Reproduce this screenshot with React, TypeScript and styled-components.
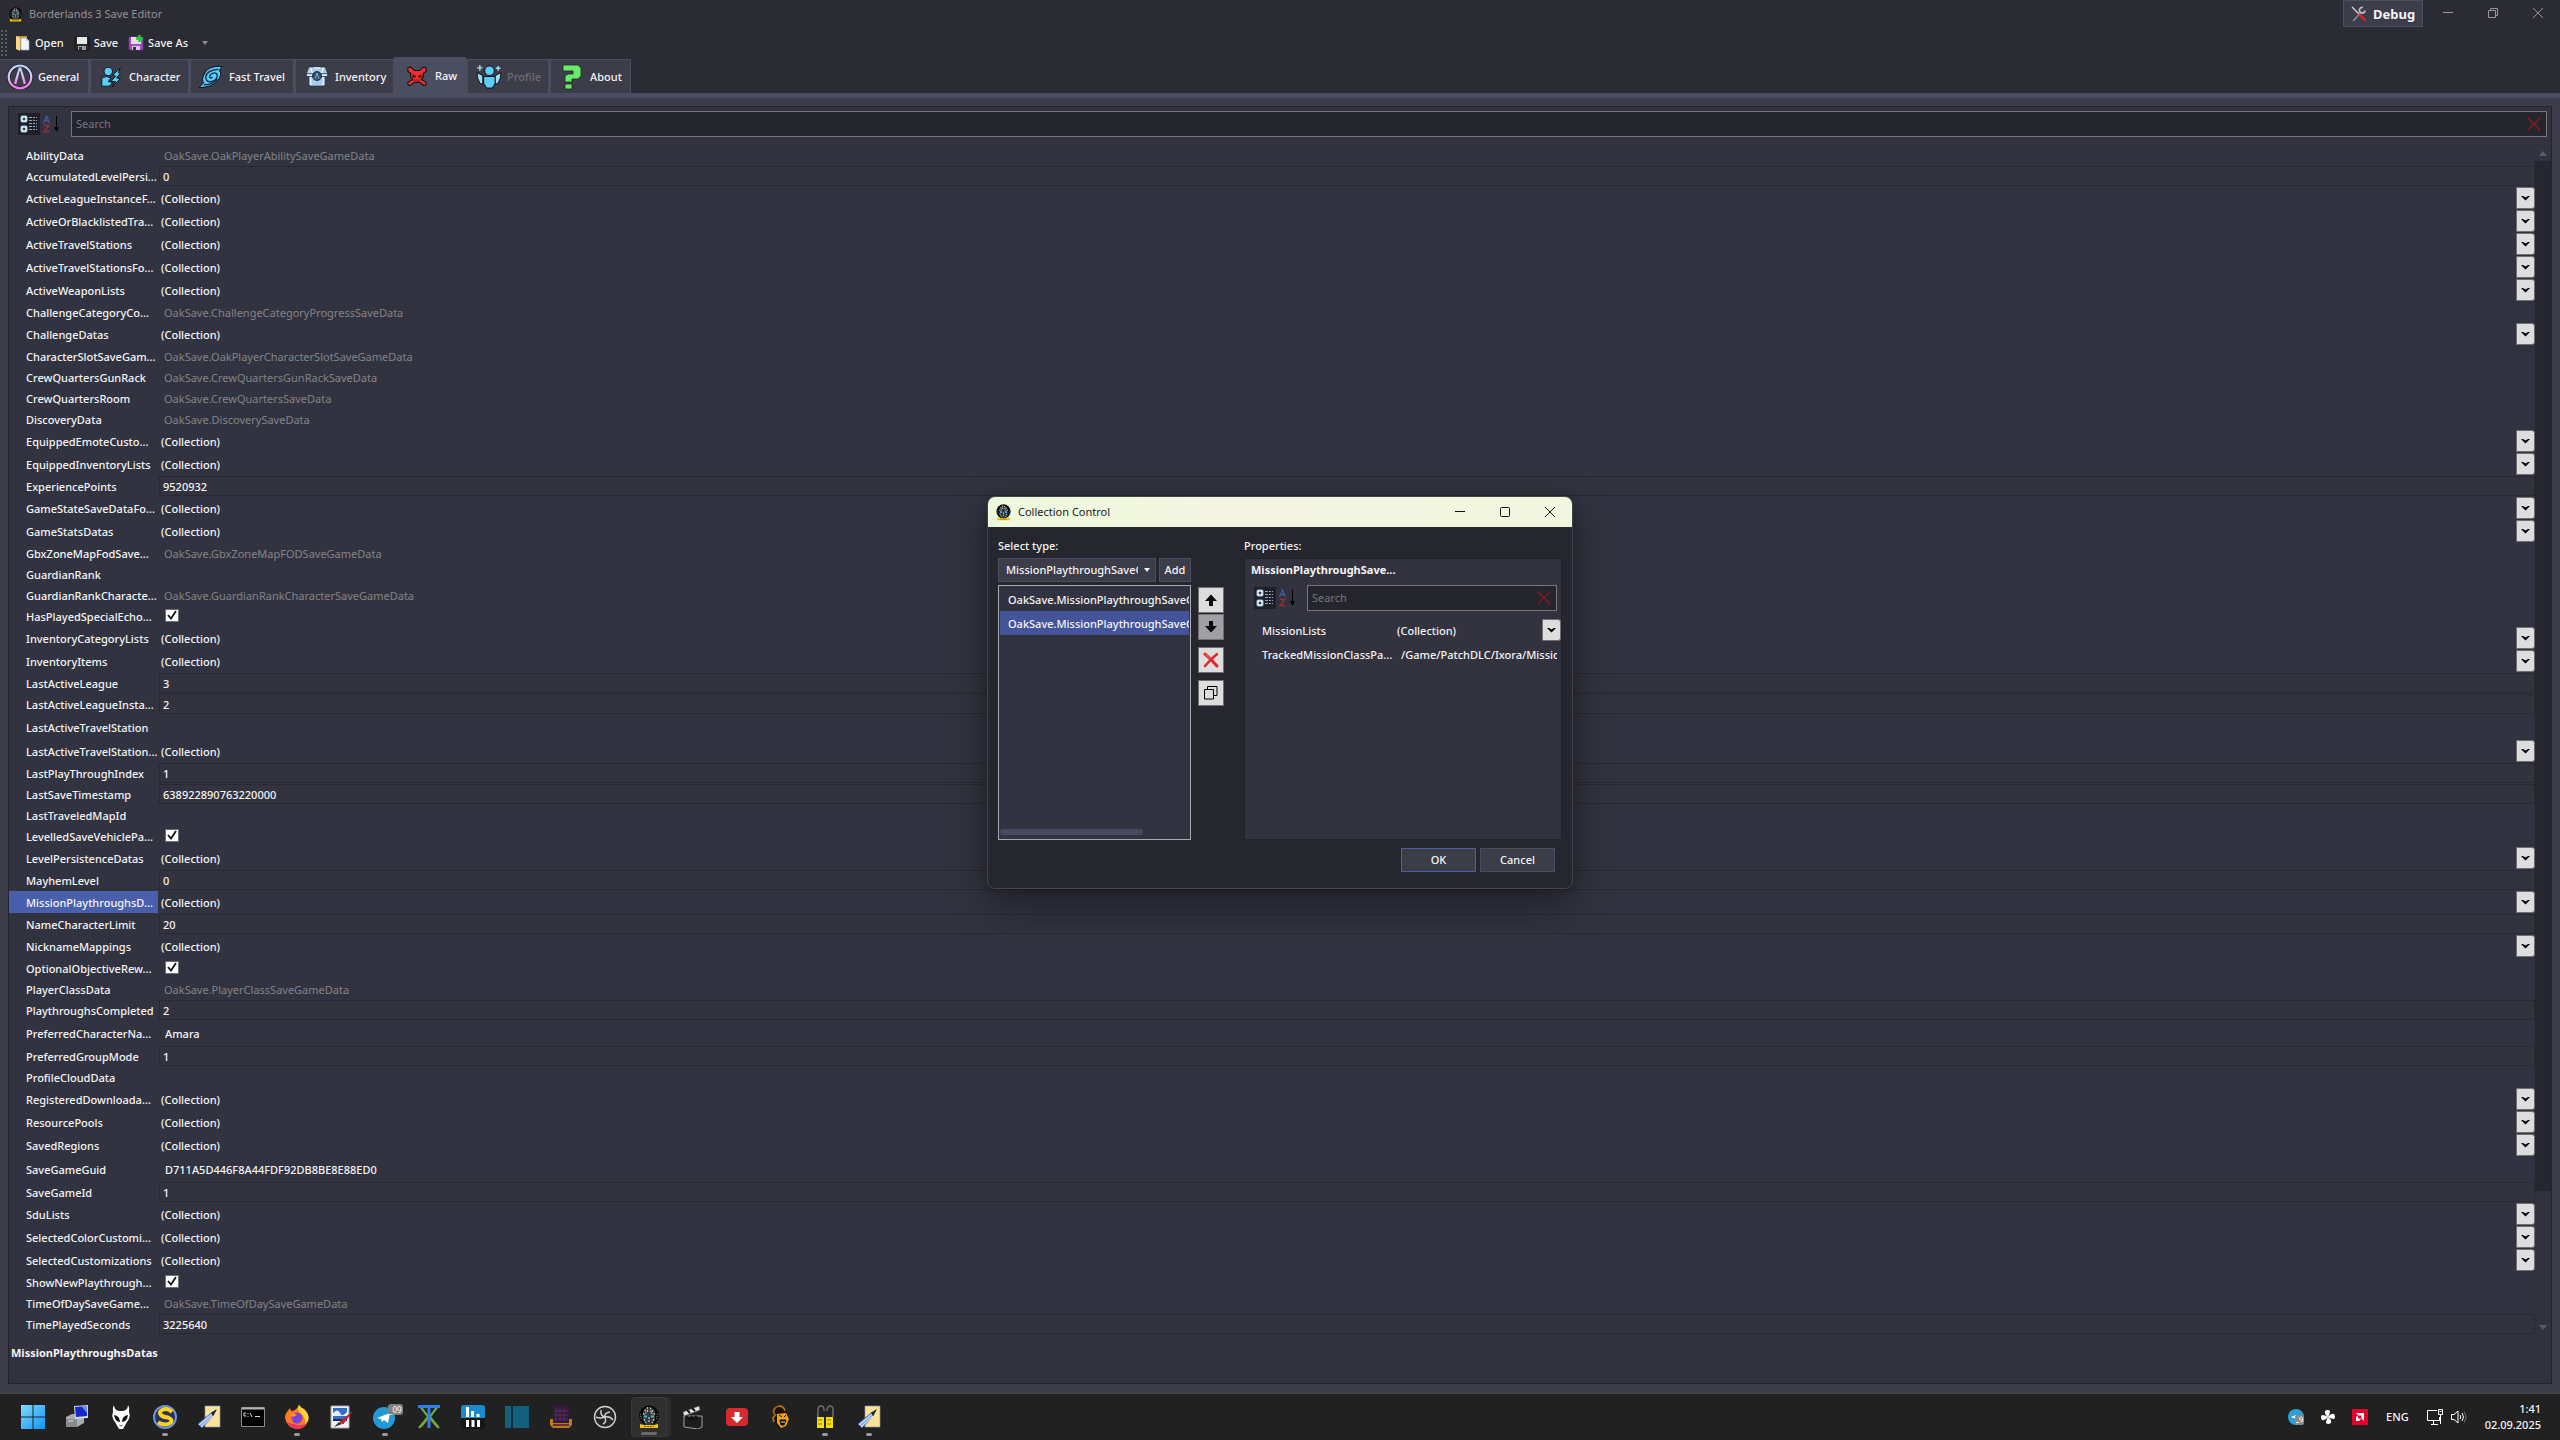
import React, { useId } from "react";
import styled, { createGlobalStyle, css } from "styled-components";

const c = {
  shell: "#2b2b33",
  tab: "#3d3c49",
  line: "#4b4e61",
  panel: "#33333f",
  list: "#323340",
  deep: "#25252d",
  edge: "#23232c",
  box: "#292932",
  accent: "#4a5fab",
  text: "#f4f4f4",
  muted: "#838386",
};

const Global = createGlobalStyle`
  * { box-sizing: border-box; }
  body { margin: 0; background: ${c.shell}; }
  body, button, input, select {
    font-family: "Noto Sans", "Open Sans", sans-serif;
    font-size: 11px;
    font-weight: 500;
    line-height: 16px;
    color: ${c.text};
  }
  button { margin: 0; padding: 0; border: 0; background: none; }
  svg { display: block; flex: none; }
`;

/* ---------- window shell ---------- */

const Desktop = styled.div`
  position: relative;
  min-height: 100vh;
  display: flex;
  flex-direction: column;
`;

const TitleBar = styled.header`
  display: flex;
  align-items: flex-start;
  height: 28px;
`;

const AppTitle = styled.h1`
  display: flex;
  align-items: center;
  gap: 6px;
  flex: 1;
  height: 28px;
  margin: 0;
  padding-left: 8px;
  font-size: 11px;
  font-weight: 400;
  color: #929295;
`;

const DebugButton = styled.button`
  display: flex;
  align-items: center;
  gap: 6px;
  width: 80px;
  height: 27px;
  margin-right: 2px;
  padding-left: 7px;
  border: 1px solid ${c.line};
  background: ${c.tab};
  font-size: 13px;
  font-weight: 700;
`;

const CaptionButton = styled.button`
  display: flex;
  align-items: center;
  justify-content: center;
  width: 45px;
  height: 26px;
  color: #98989b;
`;

const Toolbar = styled.div`
  display: flex;
  align-items: center;
  height: 29px;
  gap: 4px;
`;

const Grip = styled.div`
  width: 7px;
  height: 28px;
  margin-right: 1px;
  background-image: radial-gradient(#5b5b66 1px, transparent 1px);
  background-size: 4px 4px;
`;

const ToolButton = styled.button`
  display: flex;
  align-items: center;
  gap: 4px;
  padding: 2px 3px;
`;

const OverflowButton = styled.button`
  display: flex;
  width: 20px;
  justify-content: center;
  color: #8d8d90;
`;

const Tabs = styled.nav`
  display: flex;
  align-items: flex-end;
  height: 36px;
`;

const Tab = styled.button<{ $width: number; $active?: boolean }>`
  display: flex;
  align-items: center;
  gap: 4px;
  width: ${(p) => p.$width}px;
  height: 34px;
  padding-left: 6px;
  border: 1px solid ${c.line};
  border-left-width: 2px;
  border-bottom: 0;
  background: ${c.tab};
  &:first-child { border-left-width: 0; }
  &:disabled { color: #6c6c72; }
  ${(p) => p.$active && css`
    height: 36px;
    background: ${c.line};
  `}
`;

const TabIcon = styled.span<{ $wide?: boolean }>`
  display: flex;
  justify-content: center;
  width: ${(p) => (p.$wide ? 29 : 28)}px;
`;

const Content = styled.main`
  flex: 1;
  display: flex;
  flex-direction: column;
  padding: 8px;
  padding-bottom: 9px;
  border-top: 5px solid ${c.line};
  background: ${c.tab};
`;

/* ---------- property grid ---------- */

const GridPanel = styled.section`
  flex: 1;
  display: flex;
  flex-direction: column;
  min-height: 0;
  border: 1px solid ${c.edge};
  background: ${c.panel};
`;

const GridTools = styled.div`
  display: flex;
  align-items: center;
  height: 38px;
  padding: 4px 4px 8px 9px;
`;

const SortButton = styled.button<{ $on?: boolean }>`
  display: flex;
  align-items: center;
  justify-content: center;
  width: 22px;
  height: 22px;
  background: ${(p) => (p.$on ? "#1f1f27" : "transparent")};
`;

const SearchBox = styled.div`
  flex: 1;
  display: flex;
  align-items: center;
  height: 26px;
  min-width: 0;
  margin-left: 9px;
  padding: 0 4px;
  border: 1px solid #77777a;
  background: ${c.deep};
`;

const SearchInput = styled.input`
  flex: 1;
  min-width: 0;
  padding: 0;
  border: 0;
  outline: 0;
  background: none;
  font-weight: 400;
  &::placeholder { color: #77777a; opacity: 1; }
`;

const GridBody = styled.div`
  display: flex;
  background: ${c.list};
`;

const Rows = styled.div`
  flex: 1;
  min-width: 0;
`;

const Row = styled.div<{ $h: number }>`
  display: flex;
  height: ${(p) => p.$h}px;
  padding-bottom: 1px;
`;

const Name = styled.label<{ $on?: boolean }>`
  width: 149px;
  margin-right: 1px;
  padding-top: 2px;
  padding-left: 17px;
  display: flex;
  align-items: center;
  white-space: nowrap;
  background: ${(p) => (p.$on ? c.accent : "transparent")};
`;

const Value = styled.div`
  flex: 1;
  display: flex;
  align-items: center;
  min-width: 0;
`;

const NumberInput = styled.input`
  width: 100%;
  height: 20px;
  padding: 0 3px;
  border: 1px solid ${c.box};
  outline: 0;
  background: ${c.panel};
`;

const StringInput = styled.input`
  width: 100%;
  height: 22px;
  margin-right: 4px;
  padding: 0 0 0 6px;
  border: 0;
  outline: 0;
  background: none;
`;

const CollectionText = styled.span`
  flex: 1;
  padding-top: 2px;
  padding-left: 2px;
`;

const ObjectText = styled.span`
  padding-top: 2px;
  padding-left: 5px;
  font-weight: 400;
  color: ${c.muted};
`;

const DropButton = styled.button`
  display: flex;
  align-items: center;
  justify-content: center;
  width: 19px;
  height: 22px;
  border: 1px solid #707070;
  border-radius: 0 3px 3px 0;
  background: #dddddd;
  color: #000;
`;

const Check = styled.input`
  appearance: none;
  width: 14px;
  height: 13px;
  margin: 0 0 2px 6px;
  border: 1px solid #707070;
  background: #fff;
`;

const CheckSlot = styled.span`
  display: grid;
  align-items: center;
  & > * { grid-area: 1 / 1; }
  & > svg { margin: 0 0 2px 8px; pointer-events: none; }
`;

const ScrollTrack = styled.div`
  display: flex;
  flex-direction: column;
  width: 16px;
  background: ${c.panel};
`;

const ScrollArrow = styled.button`
  display: flex;
  align-items: center;
  justify-content: center;
  height: 16px;
  color: #5a5a72;
`;

const ScrollThumb = styled.div`
  flex: 1030;
  background: #26262e;
`;

const ScrollRest = styled.div`
  flex: 128;
`;

const Description = styled.footer`
  flex: 1;
  min-height: 48px;
  padding: 10px 2px;
  font-weight: 700;
`;

/* ---------- dialog ---------- */

const Dialog = styled.section`
  position: absolute;
  top: 496px;
  left: calc(50% - 293px);
  width: 586px;
  border: 1px solid #45454d;
  border-radius: 8px;
  overflow: hidden;
  background: #26262e;
  box-shadow: 0 16px 40px rgba(0, 0, 0, 0.4), 0 0 10px rgba(0, 0, 0, 0.2);
`;

const DialogBar = styled.header`
  display: flex;
  align-items: center;
  height: 30px;
  padding-left: 7px;
  background: linear-gradient(90deg, #edf9dc, #f4f5e0 40%, #f1f6de);
  color: #1b1b1b;
`;

const DialogTitle = styled.h2`
  flex: 1;
  margin: 0 0 0 6px;
  font-size: 11px;
  font-weight: 400;
`;

const DialogCaption = styled(CaptionButton)`
  color: #111;
`;

const DialogBody = styled.div`
  display: flex;
  padding: 11px 10px 0;
`;

const Column = styled.div<{ $grow?: boolean }>`
  display: flex;
  flex-direction: column;
  width: ${(p) => (p.$grow ? "auto" : "193px")};
  flex: ${(p) => (p.$grow ? 1 : "none")};
  min-width: 0;
`;

const FieldLabel = styled.label`
  height: 16px;
  margin-bottom: 4px;
`;

const TypeRow = styled.div`
  display: flex;
  gap: 3px;
  margin-bottom: 3px;
`;

const SelectWrap = styled.div`
  display: flex;
  align-items: center;
  flex: 1;
  height: 24px;
  min-width: 0;
  padding-right: 5px;
  border: 1px solid ${c.line};
  background: ${c.tab};
`;

const TypeSelect = styled.select`
  appearance: none;
  flex: 1;
  min-width: 0;
  padding: 0 6px 0 7px;
  border: 0;
  outline: 0;
  overflow: hidden;
  text-overflow: clip;
  background: none;
`;

const PushButton = styled.button<{ $width: number; $primary?: boolean }>`
  width: ${(p) => p.$width}px;
  height: 24px;
  border: 1px solid ${(p) => (p.$primary ? c.accent : c.line)};
  background: ${c.tab};
`;

const ListBox = styled.ul`
  display: flex;
  flex-direction: column;
  height: 255px;
  margin: 0;
  padding: 1px;
  border: 1px solid #a9a9ac;
  list-style: none;
  background: ${c.list};
`;

const ListItem = styled.li<{ $on?: boolean }>`
  height: 24px;
  padding-left: 8px;
  line-height: 25px;
  overflow: hidden;
  white-space: nowrap;
  background: ${(p) => (p.$on ? "#43549a" : "transparent")};
`;

const ListScroll = styled.div`
  width: 143px;
  height: 6px;
  margin: auto 0 3px;
  border-radius: 3px;
  background: #4a4a5e;
`;

const SideButtons = styled.div`
  display: flex;
  flex-direction: column;
  gap: 7px;
  margin: 49px 20px 0 7px;
`;

const ButtonPair = styled.div`
  display: flex;
  flex-direction: column;
  gap: 1px;
`;

const SquareButton = styled.button<{ $dim?: boolean }>`
  display: flex;
  align-items: center;
  justify-content: center;
  width: 26px;
  height: 26px;
  border: 1px solid #707070;
  background: ${(p) => (p.$dim ? "#a0a0a4" : "#dddddd")};
`;

const ObjectTitle = styled.strong`
  height: 22px;
  padding: 3px 6px;
  font-weight: 700;
`;

const DialogFooter = styled.footer`
  display: flex;
  justify-content: flex-end;
  gap: 4px;
  padding: 8px 17px 16px;
`;

/* ---------- taskbar ---------- */

const Taskbar = styled.footer`
  display: flex;
  align-items: center;
  justify-content: space-between;
  height: 47px;
  padding: 0 19px 0 11px;
  border-top: 1px solid #454545;
  background: #212121;
`;

const Apps = styled.nav`
  display: flex;
`;

const AppButton = styled.button<{ $mark?: "dot" | "bar" }>`
  position: relative;
  display: flex;
  align-items: center;
  justify-content: center;
  width: 44px;
  height: 40px;
  ${(p) => p.$mark && css`
    &::after {
      content: "";
      position: absolute;
      bottom: 1px;
      left: calc(50% - ${p.$mark === "bar" ? 8 : 3}px);
      width: ${p.$mark === "bar" ? 16 : 6}px;
      height: 3px;
      border-radius: 2px;
      background: ${p.$mark === "bar" ? "#6a6a6a" : "#9a9a9a"};
    }
  `}
  ${(p) => p.$mark === "bar" && css`
    width: 36px;
    margin: 0 4px;
    border: 1px solid #3a3a3a;
    border-radius: 4px;
    background: #2f2f2f;
    box-shadow: 4px 0 0 #2c2c2c;
  `}
`;

const Tray = styled.div`
  display: flex;
  align-items: center;
  gap: 18px;
`;

const TrayGroup = styled.div<{ $gap: number }>`
  display: flex;
  gap: ${(p) => p.$gap}px;
`;

const Clock = styled.time`
  display: flex;
  flex-direction: column;
  text-align: right;
`;

/* ---------- drawings ---------- */

const HeroIcon = ({ size = 24 }: { size?: number }) => (
  <svg width={size} height={size} viewBox="0 0 24 24">
    <circle cx="12" cy="10.5" r="10" fill="#060606" />
    <path d="M6 15V7q1-4 6-5q5 1 6 5v8l-3 5H9z" fill="#34383b" />
    <path d="M8 4.500l1 4M10.500 2v6M13.500 2.500l.5 5M16 5l-1.500 4M6.500 8l1 3M17.500 8l-1 3M7 14l2 4M17 14l-2 4M12 12v6" stroke="#c2c8cc" strokeWidth="1.200" strokeDasharray="2 1" />
    <path d="M3.500 9l1 5M20.500 9l-1 5" stroke="#8d9498" strokeDasharray="1 1" />
    <path d="M7 11.500h3M14 11.500h3" stroke="#3fb6e4" strokeWidth="2.200" />
    <path d="M3 19l4 1h10l4-1v4H3z" fill="#f3c50f" />
    <path d="M7 21.500h10" stroke="#6e5200" strokeDasharray="2 1" />
  </svg>
);

const FolderIcon = () => (
  <svg width="16" height="16" viewBox="0 0 16 16">
    <path d="M1 1h11v13H1z" fill="#c8923c" />
    <path d="M1 1l4 2v13l-4-2z" fill="#f6d78c" />
    <path d="M6 3h5l3 3v9H6z" fill="#eef5f8" stroke="#9db4bd" strokeWidth=".7" />
    <path d="M11 3v3h3" fill="#c0d6de" />
  </svg>
);

const FloppyIcon = ({ plus }: { plus?: boolean }) => (
  <svg width="16" height="16" viewBox="0 0 16 16">
    <path d="M1 2h14v13H2l-1-1z" fill={plus ? "#a34cc4" : "#2a2a2c"} stroke={plus ? "#6f2b8d" : "#0e0e0f"} strokeWidth=".8" />
    <path d="M3 2h10v7H3z" fill={plus ? "#e7d9ee" : "#e4e9e6"} />
    <path d="M4 11h8v4H4z" fill={plus ? "#d9c8e4" : "#9aa0a0"} />
    <path d="M5 12h3v3H5z" fill="#333" />
    {plus && <path d="M11.500 0v7M8 3.500h7" stroke="#24c637" strokeWidth="2.400" />}
  </svg>
);

const VaultIcon = () => (
  <svg width="26" height="26" viewBox="0 0 26 26" fill="none">
    <defs>
      <linearGradient id="vault" x1="0" y1="0" x2="0" y2="1">
        <stop offset="0" stopColor="#b9d3f7" />
        <stop offset=".5" stopColor="#dcc4f3" />
        <stop offset="1" stopColor="#f07ae8" />
      </linearGradient>
    </defs>
    <circle cx="13" cy="13" r="11.300" stroke="#16161c" strokeWidth="3.400" />
    <circle cx="13" cy="13" r="11.300" stroke="url(#vault)" strokeWidth="2.200" />
    <path d="M6.500 19.500L11.600 3h2.800l5.100 16.500L16.500 21 13 7.500 9.500 21z" fill="url(#vault)" stroke="#24242c" strokeWidth=".6" />
  </svg>
);

const CharacterIcon = () => (
  <svg width="22" height="22" viewBox="0 0 24 24" fill="#5ccdf8" stroke="#101015" strokeWidth="1">
    <circle cx="9" cy="6" r="4.600" />
    <path d="M2 13q5-3 10 0l-3 4 5 1-4 4H2z" />
    <path d="M22 2l-8 8 3 1-5 6 5 0-4 6 9-9-4-1 4-5-2-1z" />
  </svg>
);

const TravelIcon = () => (
  <svg width="26" height="24" viewBox="0 0 27 24">
    <path d="M25 1Q11 0 7 8Q3 15 6 18L1 23Q14 23 20 16Q26 9 22 5Z" fill="#5ccdf8" stroke="#101015" strokeWidth="1" />
    <path d="M21 4Q9 5 8 12q0 5 5 5q6-1 7-6q0-4-4-3q-4 1-4 4q1 2 3 0M6 20q9 0 14-6" fill="none" stroke="#17324a" strokeWidth="1.500" />
  </svg>
);

const ChestIcon = () => (
  <svg width="24" height="23" viewBox="0 0 25 24" stroke="#203040" strokeWidth=".8">
    <path d="M4 2h17l3 8-3 1v10l-2 1H6l-2-1V11l-3-1z" fill="#a9cde8" />
    <path d="M6 3l2 7M19 3l-2 7M6 12v9M19 12v9M9 3h7" stroke="#eaf5fb" strokeWidth="1.300" />
    <path d="M1 9h7l1 3H2zM24 9h-7l-1 3h7z" fill="#dff0fa" />
    <circle cx="12.500" cy="11.500" r="4.700" fill="#31536f" stroke="#0e1a26" />
    <path d="M10.500 14.500l2-6 2 6" stroke="#a9cde8" fill="none" />
  </svg>
);

const SkullIcon = () => (
  <svg width="20" height="20" viewBox="0 0 22 22">
    <path d="M1 2l3-1 4 4h6l4-4 3 1v4l-3 2v4l-2 3 5 3v2l-2 2-5-4H8l-5 4-2-2v-2l5-3-2-3V8L1 6z" fill="#f02f31" stroke="#111" strokeWidth="1.200" />
    <path d="M6 9l4 2-1 2H6zM16 9l-4 2 1 2h3zM7 15h8v1H7z" fill="#5a0c10" />
  </svg>
);

const ProfileIcon = () => (
  <svg width="26" height="25" viewBox="0 0 27 26" fill="#5ccdf8" stroke="#0f0f14" strokeWidth="1">
    <circle cx="14" cy="7" r="5" />
    <path d="M8 13h12v7l-3 5h-6l-3-5z" />
    <path d="M1 9l6 3v9l-3-1q-3-5-3-11zM26 9l-6 3v9l3-1q3-5 3-11z" fill="#9adcf5" />
    <path d="M4 1v6M1 4h6M23 2v5M20.500 4.500h5" stroke="#9adcf5" strokeWidth="1.500" />
  </svg>
);

const QuestionIcon = () => (
  <svg width="20" height="26" viewBox="0 0 20 26" fill="#6ce66c" stroke="#14301a" strokeWidth=".8">
    <path d="M2 1h14l3 3v8l-3 3h-6v3H3v-6l3-2h5V7H1V2z" />
    <path d="M3 20h7v5H3z" />
  </svg>
);

const CategoryIcon = () => (
  <svg width="18" height="18" viewBox="0 0 18 18">
    <rect x="1" y="1" width="6" height="6" rx="1" fill="#fff" stroke="#8fc4f0" />
    <rect x="1" y="11" width="6" height="6" rx="1" fill="#fff" stroke="#8fc4f0" />
    <path d="M2.500 4h3M4 2.500v3M2.500 14h3M4 12.500v3" stroke="#000" />
    <path d="M9 2.500h8M9 5.500h8M9 8.500h8M9 11.500h8M9 14.500h8" stroke="#93a6c4" strokeDasharray="3 1 2 1" />
  </svg>
);

const SortIcon = () => (
  <svg width="18" height="18" viewBox="0 0 18 18" fill="none">
    <path d="M1.500 8l3-7 3 7M2.500 5.500h4" stroke="#3c5da6" strokeWidth="1.300" />
    <path d="M2 10.500h5l-5 6h5.500" stroke="#96302f" strokeWidth="1.300" />
    <path d="M14.500 1v13" stroke="#000" />
    <path d="M12 12h5l-2.500 5z" fill="#000" />
  </svg>
);

const RedCross = ({ dark }: { dark?: boolean }) => (
  <svg width="16" height="16" viewBox="0 0 16 16" fill="none" stroke={dark ? "#771d26" : "#d92b2b"} strokeLinecap="round">
    <path d="M2 2Q8 7 14 14" strokeWidth={dark ? 1.8 : 3} />
    <path d="M14 2Q7 8 2 14" strokeWidth={dark ? 1.6 : 2.4} />
    {!dark && <path d="M3 2.500l4 4" stroke="#f2908a" strokeWidth="1" />}
  </svg>
);

const Triangle = ({ up }: { up?: boolean }) => (
  <svg width="8" height="5" viewBox="0 0 8 5">
    <path d={up ? "M0 5L4 0L8 5z" : "M0 0L4 5L8 0z"} fill="currentColor" />
  </svg>
);

const SmallTriangle = () => (
  <svg width="6" height="4" viewBox="0 0 6 4">
    <path d="M0 0h6L3 4z" fill="currentColor" />
  </svg>
);

const DropArrow = () => (
  <svg width="9" height="6" viewBox="0 0 9 6">
    <path d="M0 1h2l2.500 1.500L7 1h2L4.500 5.500z" fill="#000" />
  </svg>
);

const CheckMark = () => (
  <svg width="10" height="10" viewBox="0 0 10 10">
    <path d="M1 5l3 3.500L9 1" fill="none" stroke="#111" strokeWidth="1.800" />
  </svg>
);

const MinIcon = () => (
  <svg width="10" height="10" viewBox="0 0 10 10"><path d="M0 4.500h10" stroke="currentColor" /></svg>
);
const MaxIcon = () => (
  <svg width="10" height="10" viewBox="0 0 10 10"><rect x=".5" y=".5" width="9" height="9" rx="1" fill="none" stroke="currentColor" /></svg>
);
const RestoreIcon = () => (
  <svg width="10" height="10" viewBox="0 0 10 10" fill="none" stroke="currentColor"><path d="M.5 2.500h7v7h-7zM2.500 2.500v-2h7v7h-2" /></svg>
);
const CloseIcon = () => (
  <svg width="10" height="10" viewBox="0 0 10 10"><path d="M0 0l10 10M10 0L0 10" stroke="currentColor" /></svg>
);

const ToolsIcon = () => (
  <svg width="16" height="16" viewBox="0 0 16 16" fill="none">
    <path d="M2 15L10 6.500" stroke="#8f9496" strokeWidth="1.500" />
    <path d="M14 4.500A2.800 2.800 0 1 1 12 1.500" stroke="#b9bdbf" strokeWidth="1.800" />
    <path d="M1 1l7 7" stroke="#d8d8d8" strokeWidth="1.200" />
    <path d="M8 8l6.500 6.500" stroke="#e02222" strokeWidth="2.400" />
  </svg>
);

const BlockArrow = ({ down }: { down?: boolean }) => (
  <svg width="12" height="12" viewBox="0 0 12 12">
    <path d={down ? "M4 0h4v5h4l-6 6.500L0 5h4z" : "M6 .5L12 7H8v5H4V7H0z"} fill="#0a0a0a" />
  </svg>
);

const CopyIcon = () => (
  <svg width="14" height="14" viewBox="0 0 14 14" fill="none" stroke="#000"><path d="M.5 3.500h9v9.500h-9zM3.500 3.500v-3h9.500v9h-3.500" /></svg>
);

const PencilIcon = () => (
  <svg width="24" height="24" viewBox="0 0 24 24">
    <path d="M8 1h15v21H8z" fill="#fbe39a" stroke="#8b95a8" strokeWidth=".7" />
    <path d="M1 19L14 8l5-3-3 6L5 23z" fill="#8fb0ea" stroke="#40598f" strokeWidth=".8" />
    <path d="M2 20L15 9M4 22L16 11" stroke="#dfe9fb" />
    <path d="M14 8l6-4-4 7z" fill="#20242c" />
  </svg>
);

const taskIcons: { name: string; mark?: "dot" | "bar"; art: React.ReactNode }[] = [
  { name: "Start", art: <><defs><linearGradient id="start" x1="0" y1="0" x2="1" y2="1"><stop offset="0" stopColor="#7fdcff" /><stop offset="1" stopColor="#0f94f5" /></linearGradient></defs><path d="M0 0h11.500v11.500H0zM12.500 0H24v11.500H12.500zM0 12.500h11.500V24H0zM12.500 12.500H24V24H12.500z" fill="url(#start)" /></> },
  { name: "Computer", art: <><path d="M1 12l6-3h12v9l-7 4H1z" fill="#a9adb0" /><path d="M1 14h11v8H1z" fill="#868b8f" /><path d="M9 1l14-1v13l-13 1z" fill="#d4d7da" /><path d="M10 2l12-1v10l-11 1z" fill="#1427c8" /><path d="M16 1h6v7z" fill="#6a8cf1" /><path d="M3 16h5" stroke="#e5e5e5" /></> },
  { name: "Player", art: <><path d="M5 0Q5 5 10 6h4q5-1 5-6q2 3 1 7q2 5-2 10l-4 7h-4l-4-7q-4-5-2-10Q3 3 5 0z" fill="#fff" /><path d="M5 10q6 1 6 7q-5 0-6-7zM19 10q-6 1-6 7q5 0 6-7z" fill="#111" /><path d="M10.500 20l1.500 1 1.500-1" stroke="#555" fill="none" /></> },
  { name: "Notes S", mark: "dot", art: <><circle cx="12" cy="12" r="11" fill="#27335c" stroke="#6d97d8" strokeWidth="2" /><path d="M19 7Q15 3 10 4.500Q5 7 8 10q2 2 7 2.500q5 2 3 5q-5 4-13 0" fill="none" stroke="#ffd21f" strokeWidth="4" /></> },
  { name: "Editor", art: <PencilIcon /> },
  { name: "Terminal", art: <><path d="M.5 2.500h23v19H.5z" fill="#000" stroke="#8b8b8b" /><path d="M1 3.500h22" stroke="#b4b4b4" strokeWidth="2" /><path d="M3 8h2M3 8v3M3 11h2M7 8v1M7 11v1M9 8l2 4M14 11.500h5" stroke="#ddd" /></> },
  { name: "Firefox", mark: "dot", art: <><path d="M2 7l3-4 1 3Q11 6 14 0q2 3 5 4 6 6 4 12-3 8-11 8Q2 23 0 13q0-4 2-6z" fill="#ff7a1f" /><path d="M14 0q2 3 5 4 6 6 4 12l-3 3q1-8-6-12-2-4 0-7z" fill="#ffd43a" /><path d="M2 17q4 7 11 7 6-1 8-5-9 3-19-2z" fill="#f22f6a" /><circle cx="12" cy="13" r="5.500" fill="#7d42d8" /><path d="M5 9q4-2 7 1l-4 2z" fill="#ff9a1f" /></> },
  { name: "Paint", art: <><path d="M2 1h18v22H2z" fill="#eef2f7" stroke="#a8adb5" /><path d="M4 3h14v13H4z" fill="#356fc4" /><path d="M4 8q5-5 7 0t7-1v4H4z" fill="#e3eefb" /><path d="M4 14h14v2H4z" fill="#172c55" /><path d="M11 17L23 7l-9 12z" fill="#b8262b" stroke="#b8262b" /><path d="M5 22l5-5 3 2z" fill="#333" /></> },
  { name: "Telegram", mark: "dot", art: <><circle cx="11" cy="13" r="11" fill="#2399d6" /><path d="M4 13l13-5-2 10-4-3-2 2-1-3z" fill="#fff" /></> },
  { name: "Tower", art: <><path d="M4 3l16 19M20 3L4 22" stroke="#d0533e" strokeWidth="1.800" /><path d="M4 2l7 10-9 11M20 2l-7 10 9 11" stroke="#58b947" strokeWidth="2" fill="none" /><path d="M1 1.500h22" stroke="#2f7ee8" strokeWidth="3" /><path d="M12 1v22" stroke="#2f7ee8" strokeWidth="3" /></> },
  { name: "Hearing", art: <><rect width="24" height="24" rx="3" fill="#161616" /><path d="M0 3q0-3 3-3h18q3 0 3 3v10H0z" fill="#1c8bc9" /><path d="M6.500 2v10M11.500 6v6M6.500 15v7M12 15v7M17.500 15v7M17 9v3" stroke="#fff" strokeWidth="3" /></> },
  { name: "Columns", art: <><path d="M0 1h24v22H0z" fill="#14607c" /><path d="M7 1v22" stroke="#0b1c24" strokeWidth="1.500" /></> },
  { name: "Console", art: <><path d="M1 14h22v6l-3 3H4l-3-3z" fill="#b97c1a" /><path d="M4 1h16v17H4z" fill="#35193a" /><path d="M7 3v13M11 3v13M15 3v13M5 6h14M5 10h14M5 14h14" stroke="#57305a" /><path d="M4 20h16" stroke="#6b2c3c" strokeWidth="2" /></> },
  { name: "Recorder", art: <><circle cx="12" cy="12" r="10.500" fill="#262729" stroke="#d0d0d0" strokeWidth="1.400" /><path d="M8 5q-1 6 4 7q5-1 8 3M12 12q-5 2-9 0M12 12q-1-4 5-5M12 12q2 5-2 7" fill="none" stroke="#d0d0d0" strokeWidth="1.400" /></> },
  { name: "Save Editor", mark: "bar", art: <HeroIcon /> },
  { name: "Clapper", art: <><path d="M3 11h18v11l-4 2L3 22z" fill="#1d1d1d" stroke="#a0a0a0" /><path d="M2 7l16-6 1 4L3 11z" fill="#e6e6e6" stroke="#555" strokeWidth=".6" /><path d="M6 5l3 3M11 3l3 3M5 11l3 3h4l-2-3M14 11l3 3" stroke="#111" strokeWidth="2" fill="none" /></> },
  { name: "Downloader", art: <><rect x="1" y="3" width="22" height="18" rx="4" fill="#d8292f" /><path d="M9.500 7h5v5H18l-6 6-6-6h3.500z" fill="#fff" /></> },
  { name: "Psycho", art: <><path d="M5 9Q4 2 11 1q7 0 7 8l2 6-4 7-6 1-5-7z" fill="#1b1208" /><path d="M5 9Q3 3 10 1q5 0 6 5M5 17l-1-4 3-4" fill="none" stroke="#b06d10" strokeWidth="1.800" /><path d="M8 9l9-1 3 6-3 7-5 2-4-5z" fill="#f0a01c" /><path d="M10 10l3 2M15 12l2-2M11 15h6l-2 5h-3z" stroke="#111" fill="#111" /><path d="M12 17h4" stroke="#e8e0d0" /></> },
  { name: "Locks", mark: "dot", art: <><path d="M5 12V5q0-4 3-4t3 4v1M14 6q0-5 3-5t3 4v7" fill="none" stroke="#6f6f6f" strokeWidth="1.500" /><path d="M4 12h7v11H4zM13 12h7v11h-7z" fill="#f7dd0c" /><path d="M5 15h4M14 15h4M5 19h4M14 19h4" stroke="#8d7a00" /></> },
  { name: "Editor notes", mark: "dot", art: <PencilIcon /> },
];

const BadgeHost = styled.span`
  position: relative;
  display: flex;
`;

const Badge = styled.span`
  position: absolute;
  top: -1px;
  left: 15px;
  padding: 0 1px;
  border-radius: 3px;
  background: #808080;
  font-size: 8px;
  line-height: 11px;
`;

/* ---------- data ---------- */

type Kind = "object" | "number" | "string" | "collection" | "check" | "empty";
type Prop = [name: string, kind: Kind, value?: string];

const C = "collection";
const props: Prop[] = [
  ["AbilityData", "object", "OakSave.OakPlayerAbilitySaveGameData"],
  ["AccumulatedLevelPersi...", "number", "0"],
  ["ActiveLeagueInstanceF...", C],
  ["ActiveOrBlacklistedTra...", C],
  ["ActiveTravelStations", C],
  ["ActiveTravelStationsFo...", C],
  ["ActiveWeaponLists", C],
  ["ChallengeCategoryCo...", "object", "OakSave.ChallengeCategoryProgressSaveData"],
  ["ChallengeDatas", C],
  ["CharacterSlotSaveGam...", "object", "OakSave.OakPlayerCharacterSlotSaveGameData"],
  ["CrewQuartersGunRack", "object", "OakSave.CrewQuartersGunRackSaveData"],
  ["CrewQuartersRoom", "object", "OakSave.CrewQuartersSaveData"],
  ["DiscoveryData", "object", "OakSave.DiscoverySaveData"],
  ["EquippedEmoteCusto...", C],
  ["EquippedInventoryLists", C],
  ["ExperiencePoints", "number", "9520932"],
  ["GameStateSaveDataFo...", C],
  ["GameStatsDatas", C],
  ["GbxZoneMapFodSave...", "object", "OakSave.GbxZoneMapFODSaveGameData"],
  ["GuardianRank", "empty"],
  ["GuardianRankCharacte...", "object", "OakSave.GuardianRankCharacterSaveGameData"],
  ["HasPlayedSpecialEcho...", "check"],
  ["InventoryCategoryLists", C],
  ["InventoryItems", C],
  ["LastActiveLeague", "number", "3"],
  ["LastActiveLeagueInsta...", "number", "2"],
  ["LastActiveTravelStation", "string", ""],
  ["LastActiveTravelStation...", C],
  ["LastPlayThroughIndex", "number", "1"],
  ["LastSaveTimestamp", "number", "638922890763220000"],
  ["LastTraveledMapId", "empty"],
  ["LevelledSaveVehiclePa...", "check"],
  ["LevelPersistenceDatas", C],
  ["MayhemLevel", "number", "0"],
  ["MissionPlaythroughsD...", C],
  ["NameCharacterLimit", "number", "20"],
  ["NicknameMappings", C],
  ["OptionalObjectiveRew...", "check"],
  ["PlayerClassData", "object", "OakSave.PlayerClassSaveGameData"],
  ["PlaythroughsCompleted", "number", "2"],
  ["PreferredCharacterNa...", "string", "Amara"],
  ["PreferredGroupMode", "number", "1"],
  ["ProfileCloudData", "empty"],
  ["RegisteredDownloada...", C],
  ["ResourcePools", C],
  ["SavedRegions", C],
  ["SaveGameGuid", "string", "D711A5D446F8A44FDF92DB8BE8E88ED0"],
  ["SaveGameId", "number", "1"],
  ["SduLists", C],
  ["SelectedColorCustomi...", C],
  ["SelectedCustomizations", C],
  ["ShowNewPlaythrough...", "check"],
  ["TimeOfDaySaveGame...", "object", "OakSave.TimeOfDaySaveGameData"],
  ["TimePlayedSeconds", "number", "3225640"],
];

const dialogProps: Prop[] = [
  ["MissionLists", C],
  ["TrackedMissionClassPa...", "string", "/Game/PatchDLC/Ixora/Missions/Plot"],
];

const heights: Record<Kind, number> = { object: 21, number: 21, check: 21, empty: 21, collection: 23, string: 25 };

/* ---------- components ---------- */

function PropertyRow({ prop: [name, kind, value], selected }: { prop: Prop; selected?: boolean }) {
  const id = useId();
  return (
    <Row $h={heights[kind]}>
      <Name htmlFor={id} $on={selected}>{name}</Name>
      <Value>
        {kind === "object" && <ObjectText id={id}>{value}</ObjectText>}
        {kind === "number" && <NumberInput id={id} defaultValue={value} />}
        {kind === "string" && <StringInput id={id} defaultValue={value} />}
        {kind === "check" && (
          <CheckSlot>
            <Check id={id} type="checkbox" defaultChecked />
            <CheckMark />
          </CheckSlot>
        )}
        {kind === "collection" && (
          <>
            <CollectionText>(Collection)</CollectionText>
            <DropButton id={id} aria-label="Edit collection"><DropArrow /></DropButton>
          </>
        )}
      </Value>
    </Row>
  );
}

function SearchTools() {
  return (
    <GridTools>
      <SortButton $on aria-label="Categorized"><CategoryIcon /></SortButton>
      <SortButton aria-label="Alphabetical"><SortIcon /></SortButton>
      <SearchBox>
        <SearchInput placeholder="Search" aria-label="Search" />
        <button aria-label="Clear"><RedCross dark /></button>
      </SearchBox>
    </GridTools>
  );
}

function CollectionDialog() {
  return (
    <Dialog role="dialog" aria-label="Collection Control">
      <DialogBar>
        <HeroIcon size={17} />
        <DialogTitle>Collection Control</DialogTitle>
        <DialogCaption aria-label="Minimize"><MinIcon /></DialogCaption>
        <DialogCaption aria-label="Maximize"><MaxIcon /></DialogCaption>
        <DialogCaption aria-label="Close"><CloseIcon /></DialogCaption>
      </DialogBar>
      <DialogBody>
        <Column>
          <FieldLabel htmlFor="type">Select type:</FieldLabel>
          <TypeRow>
            <SelectWrap>
              <TypeSelect id="type"><option>MissionPlaythroughSaveGameData</option></TypeSelect>
              <SmallTriangle />
            </SelectWrap>
            <PushButton $width={32}>Add</PushButton>
          </TypeRow>
          <ListBox>
            <ListItem>OakSave.MissionPlaythroughSaveGameData</ListItem>
            <ListItem $on>OakSave.MissionPlaythroughSaveGameData</ListItem>
            <ListScroll />
          </ListBox>
        </Column>
        <SideButtons>
          <ButtonPair>
            <SquareButton aria-label="Move up"><BlockArrow /></SquareButton>
            <SquareButton $dim aria-label="Move down"><BlockArrow down /></SquareButton>
          </ButtonPair>
          <SquareButton aria-label="Delete"><RedCross /></SquareButton>
          <SquareButton aria-label="Duplicate"><CopyIcon /></SquareButton>
        </SideButtons>
        <Column $grow>
          <FieldLabel as="span">Properties:</FieldLabel>
          <GridPanel>
            <ObjectTitle>MissionPlaythroughSave...</ObjectTitle>
            <SearchTools />
            <Rows>
              {dialogProps.map((p) => <PropertyRow key={p[0]} prop={p} />)}
            </Rows>
          </GridPanel>
        </Column>
      </DialogBody>
      <DialogFooter>
        <PushButton $width={75} $primary>OK</PushButton>
        <PushButton $width={75}>Cancel</PushButton>
      </DialogFooter>
    </Dialog>
  );
}

export default function App() {
  return (
    <Desktop>
      <Global />
      <TitleBar>
        <AppTitle><HeroIcon size={15} />Borderlands 3 Save Editor</AppTitle>
        <DebugButton><ToolsIcon />Debug</DebugButton>
        <CaptionButton aria-label="Minimize"><MinIcon /></CaptionButton>
        <CaptionButton aria-label="Restore"><RestoreIcon /></CaptionButton>
        <CaptionButton aria-label="Close"><CloseIcon /></CaptionButton>
      </TitleBar>
      <Toolbar>
        <Grip />
        <ToolButton><FolderIcon />Open</ToolButton>
        <ToolButton><FloppyIcon />Save</ToolButton>
        <ToolButton><FloppyIcon plus />Save As</ToolButton>
        <OverflowButton aria-label="Toolbar options"><SmallTriangle /></OverflowButton>
      </Toolbar>
      <Tabs>
        <Tab $width={89}><TabIcon><VaultIcon /></TabIcon>General</Tab>
        <Tab $width={100}><TabIcon><CharacterIcon /></TabIcon>Character</Tab>
        <Tab $width={105}><TabIcon><TravelIcon /></TabIcon>Fast Travel</Tab>
        <Tab $width={100}><TabIcon $wide><ChestIcon /></TabIcon>Inventory</Tab>
        <Tab $width={72} $active><TabIcon $wide><SkullIcon /></TabIcon>Raw</Tab>
        <Tab $width={83} disabled><TabIcon $wide><ProfileIcon /></TabIcon>Profile</Tab>
        <Tab $width={82}><TabIcon $wide><QuestionIcon /></TabIcon>About</Tab>
      </Tabs>
      <Content>
        <GridPanel>
          <SearchTools />
          <GridBody>
            <Rows>
              {props.map((p) => (
                <PropertyRow key={p[0]} prop={p} selected={p[0].startsWith("MissionPlay")} />
              ))}
            </Rows>
            <ScrollTrack>
              <ScrollArrow aria-label="Scroll up"><Triangle up /></ScrollArrow>
              <ScrollThumb />
              <ScrollRest />
              <ScrollArrow aria-label="Scroll down"><Triangle /></ScrollArrow>
            </ScrollTrack>
          </GridBody>
          <Description>MissionPlaythroughsDatas</Description>
        </GridPanel>
      </Content>
      <Taskbar>
        <Apps>
          {taskIcons.map((t) => (
            <AppButton key={t.name} $mark={t.mark} aria-label={t.name}>
              <BadgeHost>
                <svg width="24" height="24" viewBox="0 0 24 24">{t.art}</svg>
                {t.name === "Telegram" && <Badge>_09</Badge>}
              </BadgeHost>
            </AppButton>
          ))}
        </Apps>
        <Tray>
          <TrayGroup $gap={16}>
            <svg width="16" height="16" viewBox="0 0 16 16">
              <circle cx="8" cy="8" r="8" fill="#2e9fd8" />
              <path d="M3 8l5-2v4z" fill="#fff" />
              <rect x="7" y="6" width="9" height="10" rx="2" fill="#8a8a8a" />
              <path d="M8 13.500h3M14.500 9.500a1.500 1.500 0 1 0-1 1.500h1zv3l-2 .5" fill="none" stroke="#eee" />
            </svg>
            <svg width="16" height="16" viewBox="0 0 16 16" fill="#fff">
              <path d="M8 8Q4 5 5 2q3-2 5 0q0 3-2 6zM8 8q3-4 6-3q2 3 0 5q-3 0-6-2zM8 8q4 3 3 6q-3 2-5 0q0-3 2-6zM8 8q-3 4-6 3q-2-3 0-5q3 0 6 2z" />
            </svg>
            <svg width="16" height="16" viewBox="0 0 16 16">
              <rect width="16" height="16" fill="#e4002b" />
              <path d="M4 4h8v8l-2.500-2.500v-3h-3zM4 8l2-1.500V9.500h3L7.500 12H4z" fill="#fff" />
            </svg>
          </TrayGroup>
          <span>ENG</span>
          <TrayGroup $gap={8}>
            <svg width="16" height="16" viewBox="0 0 16 16" fill="none" stroke="#fff">
              <path d="M10 1.500H.5v10h12V8M4 15.500h7M6.500 12v3M11.500.5h4v5h-4zM13.500 6v9M12.500 2.500h2" />
            </svg>
            <svg width="16" height="16" viewBox="0 0 16 16" fill="none" stroke="#fff">
              <path d="M.5 5.500h2.500l4-3.500v12L3 10.500H.5zM9 6q1.500 2 0 4M11 4q3 4 0 8" />
              <path d="M13 2.500q4 5.500 0 11" stroke="#777" />
            </svg>
          </TrayGroup>
          <Clock><span>1:41</span><span>02.09.2025</span></Clock>
        </Tray>
      </Taskbar>
      <CollectionDialog />
    </Desktop>
  );
}
